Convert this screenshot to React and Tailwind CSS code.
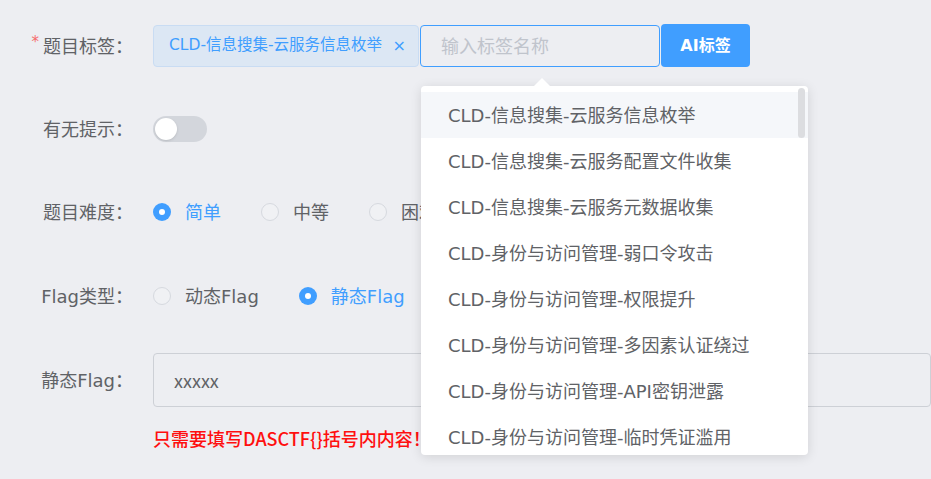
import React from "react";

const font = { fontFamily: '"DejaVu Sans", "Noto Sans CJK SC", sans-serif' };
const cjk = { fontFamily: '"Noto Sans CJK SC", "Noto Sans", sans-serif' };

const options = [
  "CLD-信息搜集-云服务信息枚举",
  "CLD-信息搜集-云服务配置文件收集",
  "CLD-信息搜集-云服务元数据收集",
  "CLD-身份与访问管理-弱口令攻击",
  "CLD-身份与访问管理-权限提升",
  "CLD-身份与访问管理-多因素认证绕过",
  "CLD-身份与访问管理-API密钥泄露",
  "CLD-身份与访问管理-临时凭证滥用",
];

const Label = ({ children, required }) => (
  <div className="w-[133px] flex items-center justify-end text-[18px] text-[#606266] shrink-0 mr-[20px]">
    {required && <span className="text-[#f56c6c] text-[15px] mr-[4px] -mt-[8px]">*</span>}
    {children}
  </div>
);

const Radio = ({ label, checked }) => (
  <div className="flex items-center mr-[40px]">
    {checked ? (
      <span className="w-[18px] h-[18px] rounded-full bg-[#409eff] flex items-center justify-center">
        <span className="w-[6px] h-[6px] rounded-full bg-white" />
      </span>
    ) : (
      <span className="w-[18px] h-[18px] rounded-full border border-[#d6d9df] bg-[#f0f1f4]" />
    )}
    <span
      className={`ml-[14px] text-[18px] ${
        checked ? "text-[#409eff]" : "text-[#606266]"
      }`}
    >
      {label}
    </span>
  </div>
);

export default function App() {
  return (
    <div
      className="relative w-[931px] h-[479px] overflow-hidden bg-[#edeef2]"
      style={font}
    >
      <div className="flex flex-col">
        {/* 题目标签 */}
        <div className="flex h-[42px] mt-[25px]">
          <Label required>题目标签：</Label>
          <div className="flex items-stretch">
            <div className="flex items-center w-[266px] pl-[15px] pr-[12px] rounded-[4px] bg-[#dce7f4] border border-[#c9dcf3] text-[#409eff] text-[15.5px]">
              <span className="flex-1 whitespace-nowrap">CLD-信息搜集-云服务信息枚举</span>
              <span className="text-[16px] leading-none">×</span>
            </div>
            <div className="ml-[1px] w-[240px] flex items-center pl-[20px] rounded-[4px] border border-[#409eff] text-[18px] text-[#c0c4cc]">
              输入标签名称
            </div>
            <button className="ml-[1px] -mt-[1px] h-[43px] w-[89px] rounded-[4px] bg-[#409eff] text-white text-[16px] font-semibold">
              AI标签
            </button>
          </div>
        </div>

        {/* 有无提示 */}
        <div className="flex h-[42px] mt-[41px]">
          <Label>有无提示：</Label>
          <div className="flex items-center">
            <div className="w-[54px] h-[26px] rounded-full bg-[#d3d6dc] flex items-center px-[2px]">
              <span className="w-[22px] h-[22px] rounded-full bg-white shadow-sm" />
            </div>
          </div>
        </div>

        {/* 题目难度 */}
        <div className="flex h-[42px] mt-[41px]">
          <Label>题目难度：</Label>
          <div className="flex items-center">
            <Radio label="简单" checked />
            <Radio label="中等" />
            <Radio label="困难" />
          </div>
        </div>

        {/* Flag类型 */}
        <div className="flex h-[42px] mt-[42px]">
          <Label>Flag类型：</Label>
          <div className="flex items-center">
            <Radio label="动态Flag" />
            <Radio label="静态Flag" checked />
          </div>
        </div>

        {/* 静态Flag */}
        <div className="flex h-[54px] mt-[36px]">
          <Label>静态Flag：</Label>
          <div
            className="w-[820px] flex items-center pl-[20px] rounded-[4px] border border-[#cdd0d6] text-[18px] text-[#606266]"
            style={cjk}
          >
            xxxxx
          </div>
        </div>
        <div className="flex mt-[18px]">
          <div className="w-[153px] shrink-0" />
          <span className="text-[18px] font-medium text-[#ff0f0f] whitespace-nowrap" style={cjk}>
            只需要填写DASCTF{"{}"}括号内内容！
          </span>
        </div>
      </div>

      {/* Dropdown */}
      <div className="absolute left-[421px] top-[86px] w-[387px] h-[369px] rounded-[4px] bg-white shadow-[0_2px_12px_rgba(0,0,0,0.12)]">
        <div className="absolute -top-[8px] left-[112px] w-0 h-0 border-l-[9px] border-r-[9px] border-b-[9px] border-l-transparent border-r-transparent border-b-white" />
        <div className="h-full overflow-hidden rounded-[4px] pt-[6px]">
          {options.map((opt, i) => (
            <div
              key={i}
              className={`h-[46px] flex items-center pl-[27px] text-[18px] text-[#606266] whitespace-nowrap ${
                i === 0 ? "bg-[#f5f7fa]" : ""
              }`}
            >
              {opt}
            </div>
          ))}
        </div>
        <div className="absolute right-[3px] top-[2px] w-[7px] h-[50px] rounded-full bg-[#dcdde0]" />
      </div>
    </div>
  );
}
